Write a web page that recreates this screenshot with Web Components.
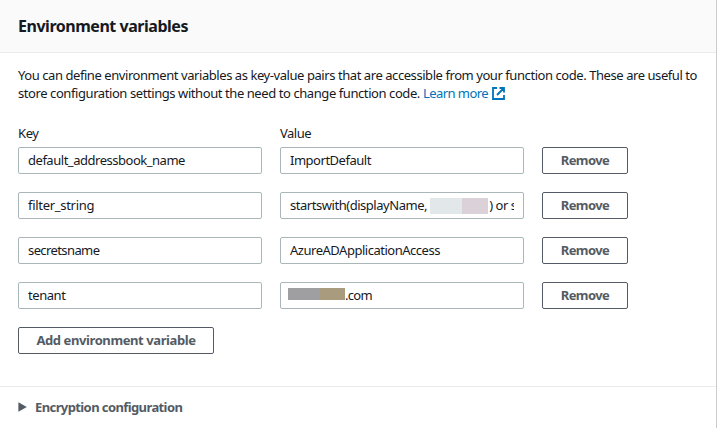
<!DOCTYPE html>
<html lang="en">
<head>
<meta charset="utf-8">
<title>Environment variables</title>
<style>
html, body { margin: 0; height: 100%; background: #fff; overflow: hidden; }
body { font: 13px/18px "Noto Sans", "Open Sans", sans-serif; color: #16191f; }
</style>
</head>
<body>
<env-panel></env-panel>
<script>
const define = (name, html, setup) => {
  const template = document.createElement('template');
  template.innerHTML = html;
  customElements.define(name, class extends HTMLElement {
    connectedCallback() {
      if (this.shadowRoot) return;
      this.attachShadow({ mode: 'open' }).append(template.content.cloneNode(true));
      if (setup) setup(this);
    }
  });
};

// Text run with its own letter spacing.
define('ui-text', `<style>:host{display:inline;white-space:pre}</style><slot></slot>`,
  el => { el.style.letterSpacing = el.getAttribute('spacing') + 'px'; });

define('ui-field', `
<style>
:host{display:flex;box-sizing:border-box;width:244px;height:27px;border:1px solid #aab7b8;border-radius:2px;padding:0 9px 0 6px;background:#fff}
div{flex:1;display:flex;overflow:hidden;white-space:pre;line-height:25px;padding-left:3px}
</style><div><slot></slot></div>`);

// Two-tone block covering a private part of a value.
define('ui-mask', `
<style>
:host{display:flex;flex:none}
i{display:block;height:100%}
.start{flex:none;width:32px;background:var(--a)}
.end{flex:1;background:var(--b)}
</style><i class="start"></i><i class="end"></i>`);

define('ui-button', `
<style>
:host{display:inline-flex;box-sizing:border-box;height:27px;border:1px solid #545b64;border-radius:2px;justify-content:center;align-items:center;color:#545b64;font-weight:700;background:#fff;line-height:25px}
</style><slot></slot>`);

define('ui-link', `
<style>
:host{color:#0073bb;display:inline-flex;align-items:center;gap:4px}
svg{display:block;flex:none}
</style><slot></slot>
<svg width="13" height="13" viewBox="0 0 13 13" fill="none" stroke="currentColor" stroke-width="1.8"><path d="M5 1H1v11h11V8M7.5 1H12v4.5M12 1L5 8"/></svg>`);

define('env-row', `
<style>:host{display:grid;grid-template-columns:244px 244px 86px;gap:18px;height:27px}</style>
<slot></slot><ui-button><ui-text spacing="-0.6">Remove</ui-text></ui-button>`);

define('panel-header', `
<style>:host{display:flex;box-sizing:border-box;height:53px;padding:0 18px;align-items:center;background:#fafafa;border-bottom:1px solid #eaeded;font-size:16px;font-weight:700;line-height:22px}</style>
<slot></slot>`);

define('panel-expander', `
<style>:host{display:flex;box-sizing:border-box;padding:11px 18px;gap:8px;border-top:1px solid #eaeded;color:#545b64;font-weight:700;align-items:center}
svg{display:block}</style>
<svg width="9" height="10" viewBox="0 0 9 10"><path fill="currentColor" d="M.4 .2L8.8 5L.4 9.8z"/></svg><slot></slot>`);

define('env-panel', `
<style>
:host{display:flex;flex-direction:column;box-sizing:border-box;height:428px;border-right:1px solid #ccc;background:#fff}
panel-header,main{flex:none}
main{display:flex;flex-direction:column;padding:13px 18px 0;height:333px;box-sizing:border-box}
p{margin:0;height:36px}
.line{display:flex;height:18px;gap:3px}
.labels{display:grid;grid-template-columns:244px 244px;gap:18px;margin-top:22px;height:18px}
.rows{display:grid;gap:18px;margin-top:5px}
.add{width:196px;margin-top:18px}
.light{--a:#e2e7ea;--b:#dbd1d9;width:58px;height:16px;margin:5px 1px 0 3px}
.dark{--a:#9f9ea1;--b:#a99c7e;width:57px;height:12px;margin:5px 0 0 -2px}
</style>
<panel-header><ui-text spacing="-0.47">Environment variables</ui-text></panel-header>
<main>
<p>
<span class="line"><ui-text spacing="-0.435">You can define environment variables as key-value pairs that are accessible from your function code. These are useful to</ui-text></span>
<span class="line"><ui-text spacing="-0.42">store configuration settings without the need to change function code.</ui-text><ui-link><ui-text spacing="-0.55">Learn more</ui-text></ui-link></span>
</p>
<div class="labels"><ui-text spacing="-0.4">Key</ui-text><ui-text spacing="-0.5">Value</ui-text></div>
<div class="rows">
<env-row><ui-field><ui-text spacing="-0.475">default_addressbook_name</ui-text></ui-field><ui-field><ui-text spacing="-0.48">ImportDefault</ui-text></ui-field></env-row>
<env-row><ui-field><ui-text spacing="-0.3">filter_string</ui-text></ui-field><ui-field><ui-text spacing="-0.46">startswith(displayName,</ui-text><ui-mask class="light"></ui-mask><ui-text spacing="-0.45">) or s</ui-text></ui-field></env-row>
<env-row><ui-field><ui-text spacing="-0.6">secretsname</ui-text></ui-field><ui-field><ui-text spacing="-0.48">AzureADApplicationAccess</ui-text></ui-field></env-row>
<env-row><ui-field><ui-text spacing="-0.45">tenant</ui-text></ui-field><ui-field><ui-mask class="dark"></ui-mask><ui-text spacing="-0.7">.com</ui-text></ui-field></env-row>
</div>
<ui-button class="add"><ui-text spacing="-0.41">Add environment variable</ui-text></ui-button>
</main>
<panel-expander><ui-text spacing="-0.6">Encryption configuration</ui-text></panel-expander>`);
</script>
</body>
</html>
